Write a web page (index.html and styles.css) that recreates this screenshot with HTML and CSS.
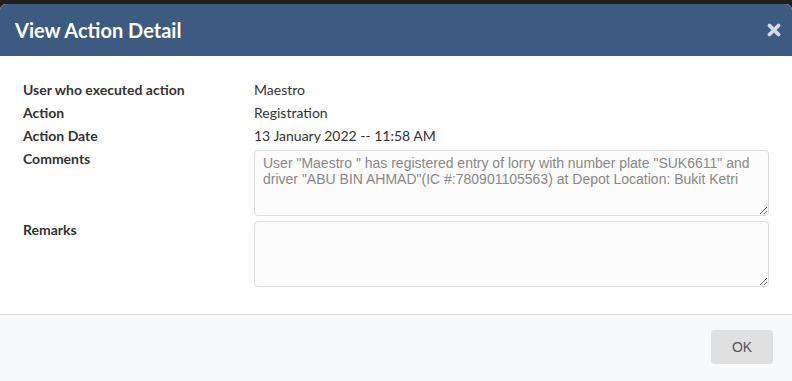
FILE: index.html
```html
<!DOCTYPE html>
<html lang="en">
<head>
    <meta charset="UTF-8">
    <meta name="viewport" content="width=device-width, initial-scale=1.0">
    <title>View Action Detail</title>
    <link rel="stylesheet" href="styles.css">
</head>
<body>
    <div class="modal">
        <div class="modal-header">
            <h2>View Action Detail</h2>
            <span class="close">
                <svg width="14" height="14" viewBox="0 0 14 14">
                    <path d="M2.5 2.5 L11.5 11.5 M11.5 2.5 L2.5 11.5" stroke="currentColor" stroke-width="3.8" stroke-linecap="round"/>
                </svg>
            </span>
        </div>
        <div class="modal-body">
            <div class="label">User who executed action</div>
            <div class="value">Maestro</div>

            <div class="label">Action</div>
            <div class="value">Registration</div>

            <div class="label">Action Date</div>
            <div class="value">13 January 2022 -- 11:58 AM</div>

            <div class="label">Comments</div>
            <textarea class="field" readonly>User "Maestro " has registered entry of lorry with number plate "SUK6611" and driver "ABU BIN AHMAD"(IC #:780901105563) at Depot Location: Bukit Ketri</textarea>

            <div class="label">Remarks</div>
            <textarea class="field"></textarea>
        </div>
        <div class="modal-footer">
            <button class="btn">OK</button>
        </div>
    </div>
</body>
</html>
```

FILE: styles.css
```css
body {
    margin: 0;
    background-color: #1f1f1f;
    font-family: 'Lato', sans-serif;
    height: 381px;
    overflow: hidden;
}

.modal {
    margin-top: 4px;
    background-color: #fff;
    border-radius: 6px 6px 0 0;
    overflow: hidden;
    height: 377px;
    display: flex;
    flex-direction: column;
}

.modal-header {
    height: 52px;
    background-color: #3d5b81;
    display: flex;
    align-items: center;
    justify-content: space-between;
    padding: 0 11px 0 15px;
}

.modal-header h2 {
    margin: 0;
    color: #fff;
    font-size: 20px;
    font-weight: bold;
}

.close {
    color: #d3dae4;
    display: flex;
    margin-top: -1px;
}

.modal-body {
    display: grid;
    grid-template-columns: 231px 1fr;
    row-gap: 5px;
    padding: 25px 23px 27px 23px;
}

.label {
    font-size: 14px;
    font-weight: bold;
    color: #333;
    line-height: 18px;
}

.value {
    font-size: 14px;
    color: #333;
    line-height: 18px;
}

textarea.field {
    height: 66px;
    box-sizing: border-box;
    margin: 0;
    padding: 4px 8px;
    border: 1px solid #ddd;
    border-radius: 4px;
    background-color: #fcfcfc;
    font-family: Arial, 'Liberation Sans', Helvetica, sans-serif;
    font-size: 14px;
    line-height: 16px;
    color: #888;
    resize: vertical;
}

.modal-footer {
    flex: 1;
    background-color: #f8f9fa;
    border-top: 1px solid #dcdcdc;
    display: flex;
    justify-content: flex-end;
    align-items: flex-start;
    padding: 15px 19px;
}

.btn {
    width: 62px;
    height: 34px;
    border: none;
    border-radius: 4px;
    background-color: #e0e0e0;
    color: #555;
    font-family: Arial, 'Liberation Sans', Helvetica, sans-serif;
    font-size: 14px;
}
```
